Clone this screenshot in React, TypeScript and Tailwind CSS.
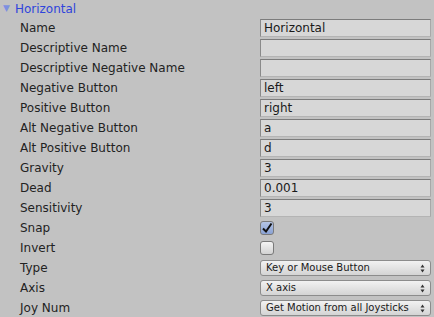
const fields: { label: string; kind: "text" | "check" | "select"; value?: string; checked?: boolean }[] = [
  { label: "Name", kind: "text", value: "Horizontal" },
  { label: "Descriptive Name", kind: "text", value: "" },
  { label: "Descriptive Negative Name", kind: "text", value: "" },
  { label: "Negative Button", kind: "text", value: "left" },
  { label: "Positive Button", kind: "text", value: "right" },
  { label: "Alt Negative Button", kind: "text", value: "a" },
  { label: "Alt Positive Button", kind: "text", value: "d" },
  { label: "Gravity", kind: "text", value: "3" },
  { label: "Dead", kind: "text", value: "0.001" },
  { label: "Sensitivity", kind: "text", value: "3" },
  { label: "Snap", kind: "check", checked: true },
  { label: "Invert", kind: "check", checked: false },
  { label: "Type", kind: "select", value: "Key or Mouse Button" },
  { label: "Axis", kind: "select", value: "X axis" },
  { label: "Joy Num", kind: "select", value: "Get Motion from all Joysticks" },
];

function TextField({ value }: { value: string }) {
  return (
    <div className="h-[18px] flex-1 border border-t-[#7c7c7c] border-l-[#8a8a8a] border-r-[#a8a8a8] border-b-[#b4b4b4] bg-[#d7d7d7] px-[3px] text-[12px] leading-[16px] text-[#1a1a1a]">
      {value}
    </div>
  );
}

function CheckBox({ checked }: { checked: boolean }) {
  return (
    <div
      className={
        "flex h-[14px] w-[14px] items-center justify-center rounded-[3px] border border-[#7a7a7a] " +
        (checked ? "bg-gradient-to-b from-[#b4c4e4] to-[#8aa2d4]" : "bg-gradient-to-b from-[#f4f4f4] to-[#d2d2d2]")
      }
    >
      {checked && (
        <svg width="12" height="12" viewBox="0 0 12 12">
          <path d="M2 6.5 L5 9.5 L10.5 1.5" fill="none" stroke="#111" strokeWidth="2" />
        </svg>
      )}
    </div>
  );
}

function Select({ value }: { value: string }) {
  return (
    <div className="flex h-[16px] flex-1 items-center justify-between rounded-[3px] border border-[#8c8c8c] bg-gradient-to-b from-[#f2f2f2] to-[#d4d4d4] pl-[5px] pr-[5px] text-[10px] text-[#1a1a1a]">
      <span className="leading-[14px]">{value}</span>
      <svg width="5" height="9" viewBox="0 0 5 9">
        <path d="M0.5 3.5 L2.5 0.5 L4.5 3.5 Z M0.5 5.5 L2.5 8.5 L4.5 5.5 Z" fill="#333" />
      </svg>
    </div>
  );
}

export default function App() {
  return (
    <div
      className="h-[317px] w-[434px] overflow-hidden bg-[#c2c2c2] text-[#222]"
      style={{ fontFamily: '"DejaVu Sans", Verdana, sans-serif' }}
    >
      <div className="flex h-[18px] items-center pl-[3px] text-[12px] text-[#2f44dc]">
        <span className="mr-[5px] text-[9px] text-[#7d8fe0]">▼</span>
        Horizontal
      </div>
      <div className="flex flex-col">
        {fields.map((f) => (
          <div key={f.label} className="flex h-[20px] items-center pr-[3px]">
            <div className="w-[260px] pl-[20px] text-[12px]">{f.label}</div>
            {f.kind === "text" && <TextField value={f.value ?? ""} />}
            {f.kind === "check" && <CheckBox checked={!!f.checked} />}
            {f.kind === "select" && <Select value={f.value ?? ""} />}
          </div>
        ))}
      </div>
    </div>
  );
}
